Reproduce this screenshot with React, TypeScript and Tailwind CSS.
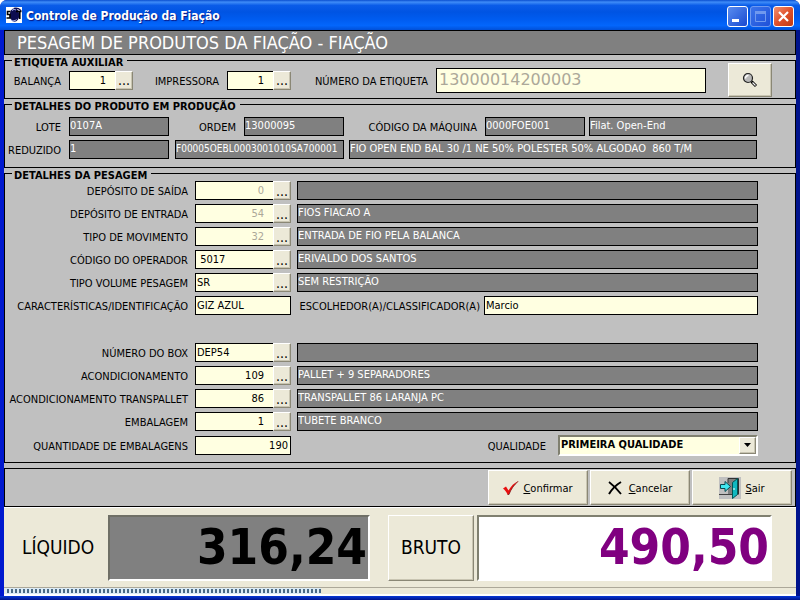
import type { ButtonHTMLAttributes, InputHTMLAttributes, ReactNode } from 'react';
import { clsx } from 'clsx';

const raised =
  'border border-t-white border-l-white border-r-[#8a8775] border-b-[#8a8775] bg-[#ece9d8] shadow-[inset_-1px_-1px_0_#c9c5b2]';

const AppIcon = () => (
  <svg viewBox="0 0 16 16" className="h-4 w-4 shrink-0" aria-hidden>
    <rect width="16" height="16" fill="#fff" />
    <ellipse cx="8.500" cy="8" rx="4.800" ry="6.800" fill="#0c0c50" />
    <path d="M8 1.500c3-1 6 .5 7 2.500" fill="none" stroke="#0c0c50" strokeWidth="1.500" />
    <path d="M4.500 4.500H1.500v3h2.500v3.500H.5" fill="none" stroke="#000" strokeWidth="1.600" />
    <path d="M10 4.500h5.500M13.800 4.500v7.500" fill="none" stroke="#000" strokeWidth="1.600" />
    <path d="M6 3.500c1.500-1.500 3-1 4-.5M5 13c2 1.500 4 1 5.500-.5" fill="none" stroke="#b8c4ff" strokeWidth="1" />
  </svg>
);

const SearchIcon = () => (
  <svg viewBox="0 0 16 16" className="h-4 w-4" aria-hidden>
    <circle cx="6" cy="6" r="4.500" fill="#b8b8b8" stroke="#222" strokeWidth="1.200" />
    <path d="M3.500 6.500a2.800 2.800 0 0 1 3-3" fill="none" stroke="#fff" strokeWidth="1.500" />
    <path d="M9.500 9.500l4.500 4.500" stroke="#000" strokeWidth="3" />
    <path d="M10.500 10.500l3 3" stroke="#f4f4f4" strokeWidth="1.200" />
  </svg>
);

const CheckIcon = () => (
  <svg viewBox="0 0 16 14" className="h-[14px] w-4" aria-hidden>
    <path d="M0 7.500L3 5.500l2.500 4C8 5 11 2 15.500 0 11 4 8 8 6 13.500H4.500C3.500 11 2 9 0 7.500z" fill="#e81010" />
    <path d="M15.500 0C11 4 8 8 6 13.500H4.500" fill="none" stroke="#701010" strokeWidth="0.700" />
  </svg>
);

const CrossIcon = () => (
  <svg viewBox="0 0 14 14" className="mr-[3px] h-[14px] w-[14px]" aria-hidden>
    <path d="M1 1c4 3 8 7 12 12" stroke="#000" strokeWidth="1.800" fill="none" />
    <path d="M13 1C8 4 4 8 1 13" stroke="#000" strokeWidth="2" fill="none" />
  </svg>
);

const DoorIcon = () => (
  <svg viewBox="0 0 22 22" className="h-[22px] w-[22px]" aria-hidden>
    <rect width="22" height="22" fill="#c0c0c0" />
    <path d="M9 1h10v17H9z" fill="#808080" />
    <path d="M0 17.500h13" stroke="#404040" />
    <path d="M9 6V1.500h10.500v16" fill="none" stroke="#303030" />
    <path d="M1.500 7.500H6V4.500l5.500 5-5.500 5v-3H1.500z" fill="#40e8f0" stroke="#084850" />
    <path d="M13.500 5.500l5-4v16l-5 4z" fill="#10b8c0" stroke="#055" />
    <path d="M15 11v2" stroke="#fff" />
  </svg>
);

type GroupBoxProps = { title: string; className?: string; children: ReactNode };

const GroupBox = ({ title, className, children }: GroupBoxProps) => (
  <fieldset className="min-w-0 border border-black">
    <legend className="ml-[7px] h-[11px] pr-1 pl-[2px] text-[11px] leading-[15px] font-bold">{title}</legend>
    <div className={clsx('-mt-1', className)}>{children}</div>
  </fieldset>
);

const Label = ({ htmlFor, className, children }: { htmlFor: string; className?: string; children: ReactNode }) => (
  <label htmlFor={htmlFor} className={clsx('shrink-0 pt-[2px] text-right whitespace-nowrap', className)}>
    {children}
  </label>
);

type FieldProps = InputHTMLAttributes<HTMLInputElement>;

const TextField = ({ className, ...props }: FieldProps) => (
  <input
    {...props}
    className={clsx('h-[19px] min-w-0 border border-black bg-[#ffffe1] px-px outline-none', className)}
  />
);

const Display = ({ className, ...props }: FieldProps) => (
  <input
    readOnly
    {...props}
    className={clsx('h-[19px] min-w-0 border border-black bg-[#808080] pb-[2px] text-white outline-none', className)}
  />
);

const LookupField = ({ id, value, align = 'right', disabled, wide }: {
  id: string;
  value: string;
  align?: 'left' | 'right';
  disabled?: boolean;
  wide?: boolean;
}) => (
  <div className={clsx('flex shrink-0', wide ? 'w-24' : 'w-16')}>
    <input
      id={id}
      defaultValue={value}
      disabled={disabled}
      className={clsx(
        'h-[19px] min-w-0 flex-1 border border-r-0 border-black bg-[#ffffe1] outline-none disabled:text-[#aca899]',
        align === 'right' ? 'pr-[9px] text-right' : 'pl-px',
      )}
    />
    <button type="button" aria-label="Procurar" className={clsx(raised, 'h-[19px] w-[18px] shrink-0 text-[14px] leading-[14px]')}>
      ...
    </button>
  </div>
);

type WeighingRow = {
  id: string;
  label: string;
  value: string;
  description: string;
  align?: 'left' | 'right';
  disabled?: boolean;
};

const movementRows: WeighingRow[] = [
  { id: 'saida', label: 'DEPÓSITO DE SAÍDA', value: '0', description: '', disabled: true },
  { id: 'entrada', label: 'DEPÓSITO DE ENTRADA', value: '54', description: 'FIOS FIACAO A', disabled: true },
  { id: 'movimento', label: 'TIPO DE MOVIMENTO', value: '32', description: 'ENTRADA DE FIO PELA BALANCA', disabled: true },
  { id: 'operador', label: 'CÓDIGO DO OPERADOR', value: ' 5017', description: 'ERIVALDO DOS SANTOS', align: 'left' },
  { id: 'volume', label: 'TIPO VOLUME PESAGEM', value: 'SR', description: 'SEM RESTRIÇÃO', align: 'left' },
];

const packingRows: WeighingRow[] = [
  { id: 'box', label: 'NÚMERO DO BOX', value: 'DEP54', description: '', align: 'left' },
  { id: 'acond', label: 'ACONDICIONAMENTO', value: '109', description: 'PALLET + 9 SEPARADORES' },
  { id: 'transpallet', label: 'ACONDICIONAMENTO TRANSPALLET', value: '86', description: 'TRANSPALLET 86 LARANJA PC' },
  { id: 'embalagem', label: 'EMBALAGEM', value: '1', description: 'TUBETE BRANCO' },
];

const LookupRow = ({ row }: { row: WeighingRow }) => (
  <div className="flex items-center">
    <Label htmlFor={row.id} className="mr-[7px] w-[183px]">{row.label}</Label>
    <LookupField id={row.id} value={row.value} align={row.align} disabled={row.disabled} wide />
    <Display aria-label={row.label} defaultValue={row.description} className="ml-[6px] flex-1" />
  </div>
);

const ActionButton = ({ icon, label, ...props }: { icon: ReactNode; label: string } & ButtonHTMLAttributes<HTMLButtonElement>) => (
  <button type="button" {...props} className={clsx(raised, 'flex h-[35px] w-[100px] items-center justify-center gap-1')}>
    {icon}
    <span className="pt-[2px]">
      <span className="underline">{label[0]}</span>
      {label.slice(1)}
    </span>
  </button>
);

const TitleBar = () => (
  <header className="flex h-[30px] items-center rounded-t-[7px] bg-[linear-gradient(180deg,#0a4fd0_0%,#3f8cf8_7%,#0a5ce8_18%,#0054e3_40%,#005cf0_65%,#0366fc_85%,#0150d8_100%)] pr-[6px] pl-[6px] text-white">
    <AppIcon />
    <h1 className="ml-1 flex-1 pt-[3px] text-[12px] font-bold [text-shadow:1px_1px_1px_#0a1883]">Controle de Produção da Fiação</h1>
    <div className="flex gap-[2px] pt-[3px]">
      <button type="button" aria-label="Minimizar" className="h-[21px] w-[21px] rounded-[3px] border border-white bg-linear-to-br from-[#5a8cf0] to-[#1a48d0]">
        <svg viewBox="0 0 19 19" aria-hidden><path d="M4 12h7v3H4z" fill="#fff" /></svg>
      </button>
      <button type="button" aria-label="Maximizar" disabled className="h-[21px] w-[21px] rounded-[3px] border border-[#6f9af0] bg-linear-to-br from-[#3c74ea] to-[#1f50d8]">
        <svg viewBox="0 0 19 19" aria-hidden>
          <path d="M4.500 5.500h10v9h-10z" fill="none" stroke="#7099ee" />
          <path d="M4 4h11v3H4z" fill="#7099ee" />
        </svg>
      </button>
      <button type="button" aria-label="Fechar" className="h-[21px] w-[21px] rounded-[3px] border border-white bg-linear-to-br from-[#f09070] via-[#e0502a] to-[#c03a10]">
        <svg viewBox="0 0 19 19" aria-hidden><path d="M5 5l9 9M14 5l-9 9" stroke="#fff" strokeWidth="2.200" /></svg>
      </button>
    </div>
  </header>
);

export default function App() {
  return (
    <div className="min-h-screen bg-white">
      <main className="flex min-h-screen flex-col rounded-t-[7px] bg-linear-to-r from-[#0019cf] to-[#00138c] font-['DejaVu_Sans_Condensed','DejaVu_Sans',sans-serif] text-[11px] leading-[13px] text-black">
        <TitleBar />
        <form className="mx-1 flex flex-1 flex-col bg-[#c0c0c0]">
          <h2 className="h-[25px] border border-black bg-[#808080] pl-3 text-[18px] leading-[23px] text-white">
            PESAGEM DE PRODUTOS DA FIAÇÃO - FIAÇÃO
          </h2>

          <GroupBox title="ETIQUETA AUXILIAR" className="flex h-9 items-center pr-[23px]">
            <Label htmlFor="balanca" className="mr-2 w-14">BALANÇA</Label>
            <LookupField id="balanca" value="1" />
            <Label htmlFor="impressora" className="mr-2 w-[86px]">IMPRESSORA</Label>
            <LookupField id="impressora" value="1" />
            <Label htmlFor="etiqueta" className="mr-2 w-[137px]">NÚMERO DA ETIQUETA</Label>
            <input
              id="etiqueta"
              defaultValue="13000014200003"
              disabled
              className="h-[25px] min-w-0 flex-1 border border-black bg-[#ffffe1] px-[2px] pb-[2px] font-['DejaVu_Sans',sans-serif] text-[16px] text-[#aca899]"
            />
            <button type="button" aria-label="Pesquisar" className={clsx(raised, 'ml-[22px] flex h-[34px] w-11 items-center justify-center')}>
              <SearchIcon />
            </button>
          </GroupBox>

          <GroupBox title="DETALHES DO PRODUTO EM PRODUÇÃO" className="flex flex-col gap-1 pt-[11px] pr-[38px] pb-2">
            <div className="flex items-center">
              <Label htmlFor="lote" className="mr-2 w-14">LOTE</Label>
              <Display id="lote" defaultValue="0107A" className="w-[100px]" />
              <Label htmlFor="ordem" className="mr-2 w-[67px]">ORDEM</Label>
              <Display id="ordem" defaultValue="13000095" className="w-[100px]" />
              <Label htmlFor="maquina" className="mr-2 w-[133px]">CÓDIGO DA MÁQUINA</Label>
              <Display id="maquina" defaultValue="0000FOE001" className="w-[100px]" />
              <Display aria-label="Máquina" defaultValue="Filat. Open-End" className="ml-1 flex-1" />
            </div>
            <div className="flex items-center">
              <Label htmlFor="reduzido" className="mr-2 w-14">REDUZIDO</Label>
              <Display id="reduzido" defaultValue="1" className="w-[100px]" />
              <Display aria-label="Código do produto" defaultValue="F00005OEBL0003001010SA700001" className="ml-[6px] w-[169px] text-[10px]" />
              <Display aria-label="Produto" defaultValue="FIO OPEN END BAL 30 /1 NE 50% POLESTER 50% ALGODAO  860 T/M" className="ml-[5px] flex-1" />
            </div>
          </GroupBox>

          <GroupBox title="DETALHES DA PESAGEM" className="flex flex-col gap-1 pt-[6px] pr-[37px] pb-[7px]">
            {movementRows.map((row) => (
              <LookupRow key={row.id} row={row} />
            ))}
            <div className="mb-6 flex items-center">
              <Label htmlFor="caracteristicas" className="mr-[7px] w-[183px]">CARACTERÍSTICAS/IDENTIFICAÇÃO</Label>
              <TextField id="caracteristicas" defaultValue="GIZ AZUL" className="w-24" />
              <Label htmlFor="escolhedor" className="mr-1 ml-[5px] w-[184px]">ESCOLHEDOR(A)/CLASSIFICADOR(A)</Label>
              <TextField id="escolhedor" defaultValue="Marcio" className="flex-1" />
            </div>
            {packingRows.map((row) => (
              <LookupRow key={row.id} row={row} />
            ))}
            <div className="flex h-5 items-center">
              <Label htmlFor="quantidade" className="mr-[7px] w-[183px]">QUANTIDADE DE EMBALAGENS</Label>
              <TextField id="quantidade" defaultValue="190" className="w-24 pr-[2px] text-right" />
              <Label htmlFor="qualidade" className="mr-3 ml-auto">QUALIDADE</Label>
              <div className="relative w-[200px]">
                <select
                  id="qualidade"
                  className="h-[21px] w-full appearance-none border-2 border-t-[#808070] border-r-white border-b-white border-l-[#808070] bg-[#ffffe1] px-px pb-px font-bold outline-none"
                >
                  <option>PRIMEIRA QUALIDADE</option>
                </select>
                <span className={clsx(raised, 'pointer-events-none absolute top-[2px] right-[2px] flex h-[17px] w-[17px] items-center justify-center')}>
                  <svg viewBox="0 0 7 4" className="h-1 w-[7px]" aria-hidden><path d="M0 0h7L3.500 4z" /></svg>
                </span>
              </div>
            </div>
          </GroupBox>

          <div className="mt-[5px] flex justify-end gap-[2px] border border-black py-px pr-[3px]">
            <ActionButton icon={<CheckIcon />} label="Confirmar" />
            <ActionButton icon={<CrossIcon />} label="Cancelar" />
            <ActionButton icon={<DoorIcon />} label="Sair" />
          </div>

          <div className="flex flex-1 items-center border-t border-white bg-[#ece9d8] pr-6 pl-[18px] text-[19px]">
            <label htmlFor="liquido" className="w-[86px] shrink-0">LÍQUIDO</label>
            <input
              id="liquido"
              readOnly
              defaultValue="316,24"
              className="h-[66px] w-[262px] min-w-0 border-2 border-t-[#6f6f66] border-r-white border-b-white border-l-[#6f6f66] bg-[#808080] pr-px text-right text-[49px] font-bold outline-none"
            />
            <button type="button" className={clsx(raised, 'ml-[18px] h-[66px] w-[86px] shrink-0')}>BRUTO</button>
            <input
              aria-label="Peso bruto"
              readOnly
              defaultValue="490,50"
              className="ml-[3px] h-[66px] min-w-0 flex-1 border-2 border-t-[#808070] border-r-white border-b-white border-l-[#808070] bg-white pr-px text-right text-[49px] font-bold text-[#800080] outline-none"
            />
          </div>
          <div role="progressbar" aria-label="Progresso" aria-valuenow={40} className="h-[9px] border-t border-b-2 border-t-[#aca899] border-b-white bg-[#ece9d8] pl-px">
            <div className="h-[6px] w-2/5 border-y border-[#dcebf5] bg-[repeating-linear-gradient(90deg,#dcebf5_0px,#dcebf5_2px,#4a6a85_2px,#4a6a85_4px)]" />
          </div>
        </form>
        <div className="h-1 bg-linear-to-b from-[#0838d8] to-[#00138c]" />
      </main>
    </div>
  );
}
